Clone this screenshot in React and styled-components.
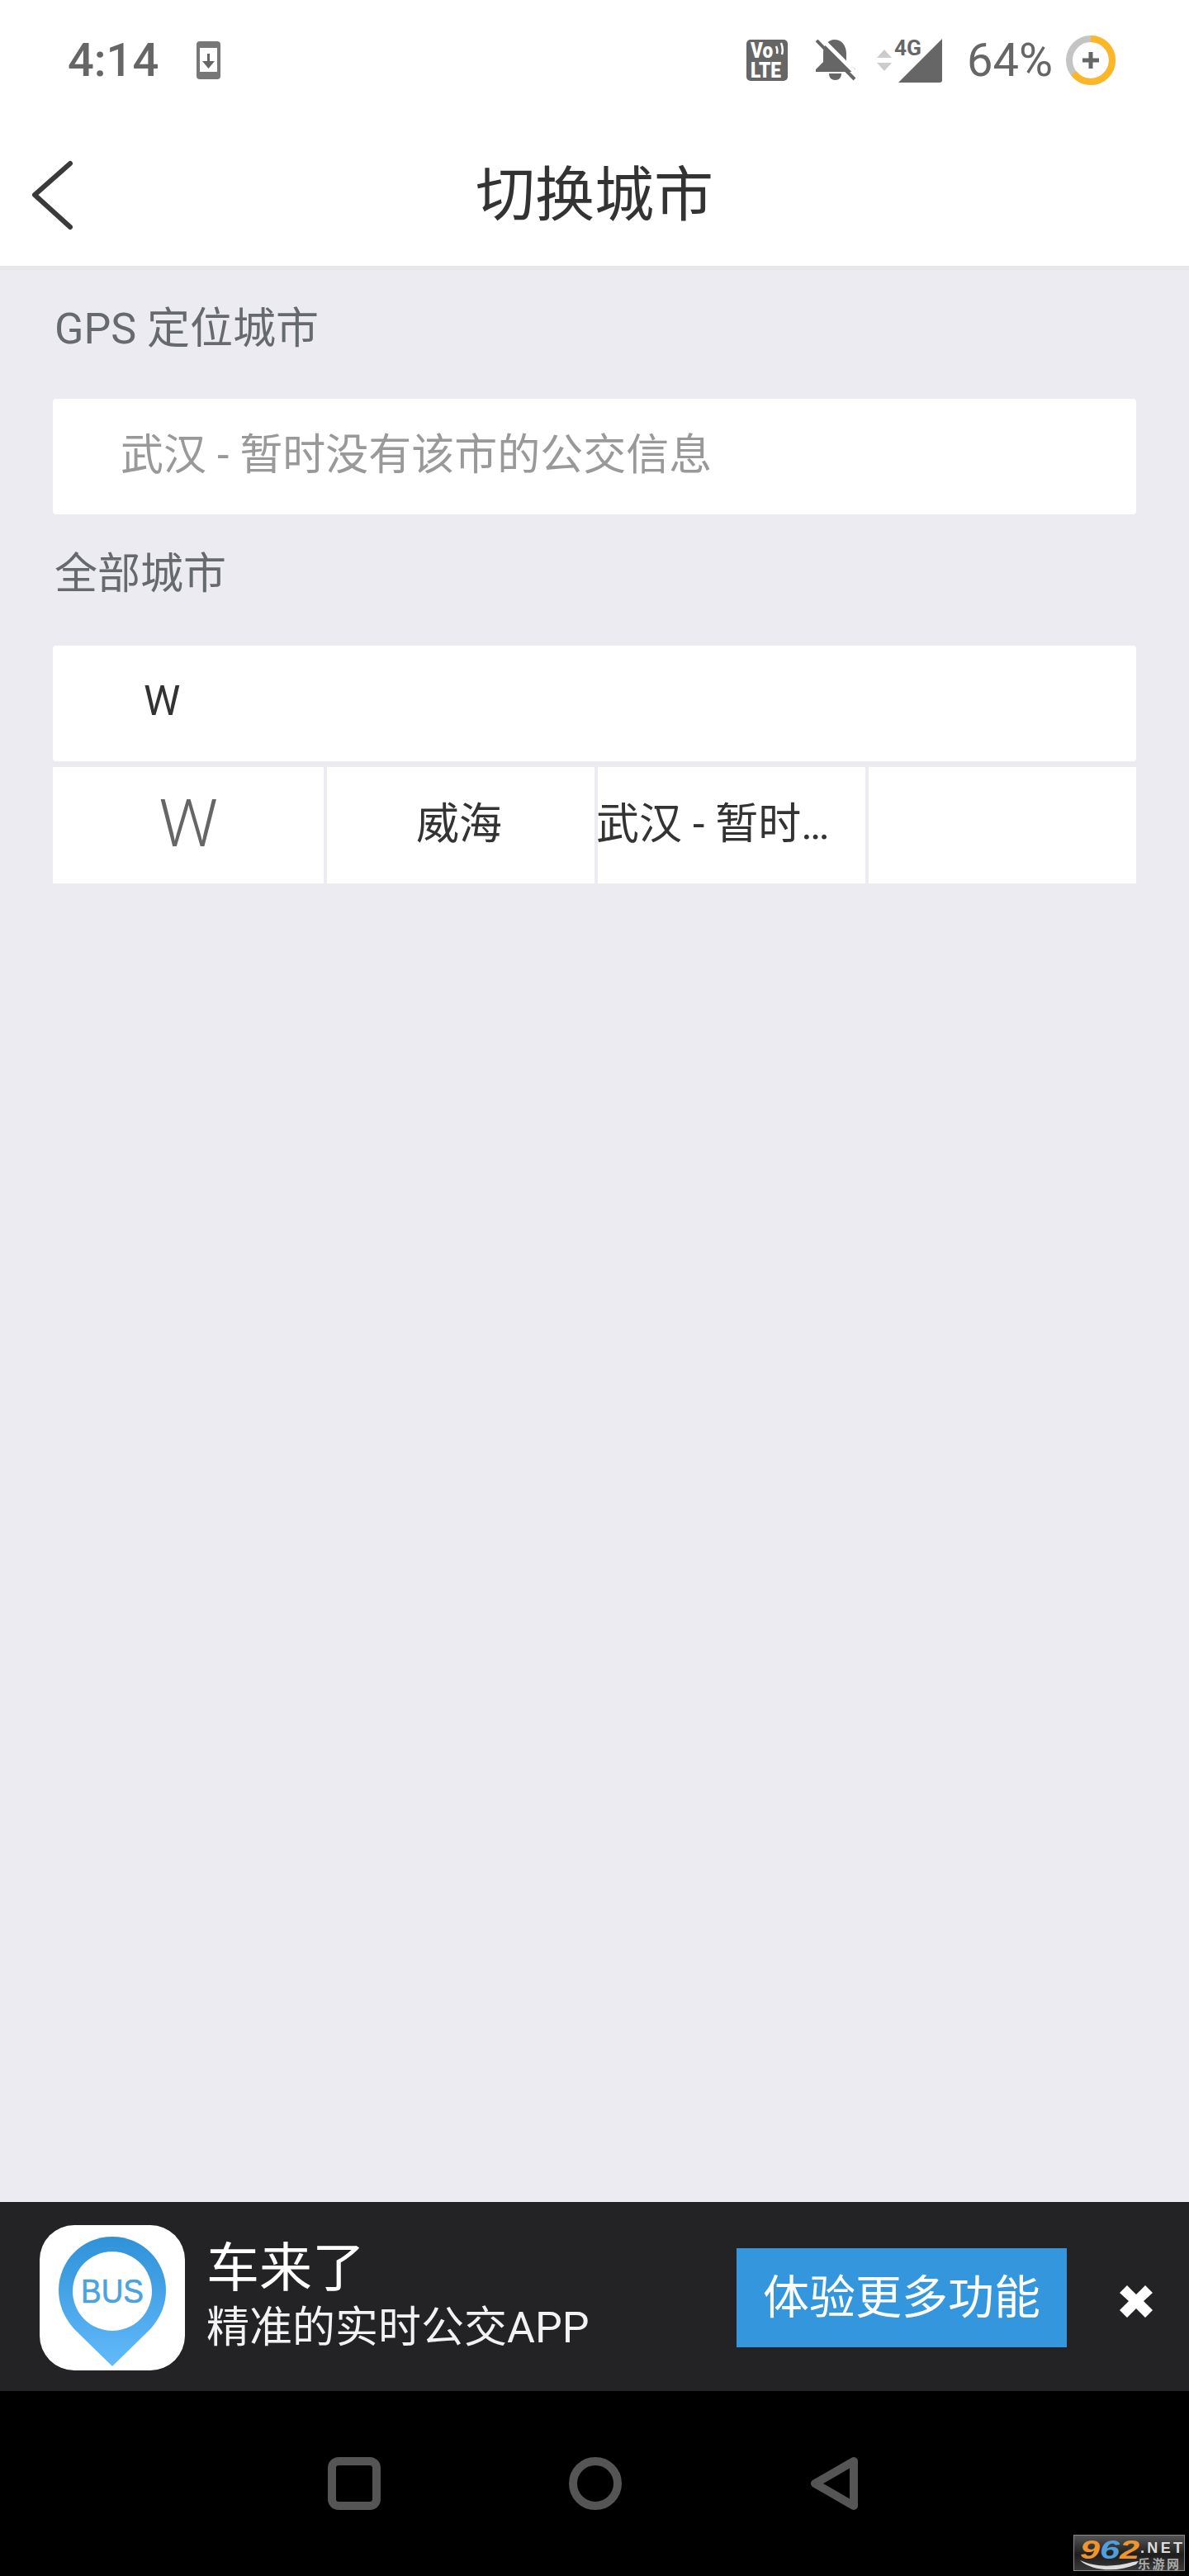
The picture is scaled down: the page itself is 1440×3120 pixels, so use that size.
import React from "react";
import styled, { createGlobalStyle } from "styled-components";

const GlobalStyle = createGlobalStyle`
  html, body {
    margin: 0;
    padding: 0;
  }
  body {
    font-family: Roboto, "Noto Sans CJK SC", sans-serif;
  }
`;

const Screen = styled.div`
  width: 1440px;
  height: 3120px;
  display: flex;
  flex-direction: column;
  position: relative;
  overflow: hidden;
  background: #ebebf1;
`;

const StatusBar = styled.div`
  height: 150px;
  flex: none;
  display: flex;
  align-items: flex-start;
  justify-content: space-between;
  padding: 43px 89px 0 82px;
  box-sizing: border-box;
  background: #fff;
  color: #666;
`;

const StatusGroup = styled.div`
  display: flex;
  align-items: center;
  height: 60px;
`;

const StatusSlot = styled.div`
  display: flex;
  margin-left: ${(p) => p.$left || 0}px;
`;

const StatusText = styled.span`
  font-family: Roboto, sans-serif;
  font-size: 56px;
  line-height: 60px;
  font-weight: ${(p) => p.$weight || 400};
  color: #666;
`;

const VolteBadge = styled.div`
  position: relative;
  width: 50px;
  height: 50px;
  box-sizing: border-box;
  padding: 1px 0 0 5px;
  border-radius: 5px;
  background: #666;
  color: #fff;
  font-family: Roboto, sans-serif;
  font-weight: 900;
  font-size: 26px;
  line-height: 24px;
  white-space: nowrap;
`;

const VolteLabel = styled.div`
  transform: scaleX(0.87);
  transform-origin: left center;
`;

const VolteWaves = styled.svg`
  position: absolute;
  top: 3px;
  right: 4px;
  display: block;
  width: 12px;
  height: 16px;
`;

const TitleBar = styled.div`
  height: 177px;
  flex: none;
  display: flex;
  align-items: center;
  justify-content: center;
  padding-bottom: 13px;
  box-sizing: border-box;
  position: relative;
  background: #fff;
  border-bottom: 5px solid #e6e6eb;
`;

const BackButton = styled.button`
  position: absolute;
  left: 38px;
  top: 43px;
  width: 52px;
  height: 86px;
  padding: 0;
  border: 0;
  background: none;
`;

const Title = styled.h1`
  margin: 0;
  font-family: "Noto Sans CJK SC", sans-serif;
  font-size: 72px;
  line-height: 100px;
  font-weight: 400;
  color: #333;
`;

const Content = styled.main`
  flex: 1;
  display: flex;
  flex-direction: column;
  padding: 0 64px;
`;

const SectionLabel = styled.div`
  height: ${(p) => p.$height}px;
  display: flex;
  align-items: center;
  padding: 0 0 24px 2px;
  box-sizing: border-box;
  font-family: Roboto, "Noto Sans CJK SC", sans-serif;
  font-size: 52px;
  color: #66696e;
`;

const InfoRow = styled.div`
  height: ${(p) => p.$height || 140}px;
  display: flex;
  align-items: center;
  padding-left: ${(p) => p.$indent}px;
  padding-bottom: ${(p) => p.$lift}px;
  box-sizing: border-box;
  border-radius: 4px;
  background: #fff;
  font-family: Roboto, "Noto Sans CJK SC", sans-serif;
  font-size: ${(p) => p.$size || 52}px;
  color: ${(p) => p.$color || "#999"};
`;

const CityGrid = styled.div`
  margin-top: 7px;
  display: grid;
  grid-template-columns: 328px repeat(3, 324px);
  gap: 4px;
  height: 141px;
`;

const CityCell = styled.div`
  display: flex;
  align-items: center;
  justify-content: ${(p) => (p.$start ? "flex-start" : "center")};
  min-width: 0;
  padding-bottom: ${(p) => (p.$letter ? 4 : 12)}px;
  box-sizing: border-box;
  background: #fff;
  font-family: Roboto, "Noto Sans CJK SC", sans-serif;
  font-size: ${(p) => (p.$letter ? 80 : 52)}px;
  font-weight: ${(p) => (p.$letter ? 300 : 400)};
  color: ${(p) => (p.$letter ? "#666" : "#333")};
  white-space: nowrap;
`;

const CityName = styled.span`
  margin-right: 4px;
`;

const ClippedName = styled.span`
  margin-left: -2px;
`;

const Dots = styled.span`
  letter-spacing: -3px;
`;

const Banner = styled.div`
  height: 229px;
  flex: none;
  display: flex;
  align-items: center;
  padding: 3px 44px 0 48px;
  box-sizing: border-box;
  background: #232325;
`;

const AppIcon = styled.div`
  width: 176px;
  height: 176px;
  flex: none;
  display: flex;
  justify-content: center;
  padding-top: 14px;
  box-sizing: border-box;
  border-radius: 42px;
  background: #fff;
`;

const AppText = styled.div`
  flex: 1;
  display: flex;
  flex-direction: column;
  padding: 0 0 12px 26px;
  color: #fff;
  font-family: "Noto Sans CJK SC", sans-serif;
`;

const AppName = styled.div`
  font-size: 64px;
  line-height: 74px;
  margin-bottom: 11px;
`;

const AppSlogan = styled.div`
  font-family: Roboto, "Noto Sans CJK SC", sans-serif;
  font-size: 52px;
  line-height: 62px;
  color: #f2f2f2;
`;

const CtaButton = styled.button`
  width: 400px;
  height: 120px;
  padding: 0 0 12px;
  border: 0;
  background: #3496dd;
  color: #fff;
  font-family: "Noto Sans CJK SC", sans-serif;
  font-size: 56px;
`;

const CloseButton = styled.button`
  width: 40px;
  height: 40px;
  margin: 8px 0 0 64px;
  padding: 0;
  border: 0;
  background: none;
`;

const NavBar = styled.nav`
  height: 224px;
  flex: none;
  display: flex;
  justify-content: center;
  gap: 228px;
  padding: 80px 0 0 2px;
  box-sizing: border-box;
  background: #000;
`;

const NavIcon = styled.svg`
  display: block;
  width: 64px;
  height: 64px;
`;

const Watermark = styled.svg`
  position: absolute;
  right: 5px;
  bottom: 6px;
  display: block;
  width: 135px;
  height: 44px;
`;

function PhoneDownload() {
  return (
    <svg width="29" height="46" viewBox="0 0 29 46">
      <rect width="29" height="46" rx="4" fill="#777" />
      <rect x="4" y="8" width="21" height="29" fill="#fff" />
      <path d="M13 15h3v9h6l-7.500 9L7 24h6z" fill="#666" />
    </svg>
  );
}

function Volte() {
  return (
    <VolteBadge>
      <VolteLabel>
        Vo
        <br />
        LTE
      </VolteLabel>
      <VolteWaves viewBox="0 0 12 16">
        <path d="M2 5q2 4 1 9M8 1q3 7 1 14" stroke="#fff" strokeWidth="2.500" fill="none" />
      </VolteWaves>
    </VolteBadge>
  );
}

function BellOff() {
  return (
    <svg width="50" height="50" viewBox="0 0 50 50">
      <path d="M23 0c9 0 14 8 14 17v10l11 9v3H0v-3l9-9V17C9 8 14 0 23 0z" fill="#666" />
      <path d="M16 41h15c0 5-3 8-7.500 8S16 46 16 41z" fill="#666" />
      <path d="M5 -3l46 46" stroke="#fff" strokeWidth="5" />
      <path d="M1 1l46 47" stroke="#666" strokeWidth="4" />
    </svg>
  );
}

function SignalCluster() {
  return (
    <svg width="82" height="64" viewBox="0 -4 82 64">
      <path d="M0 25l9-10 9 10zM0 31h18l-9 10z" fill="#ccc" />
      <text x="21" y="22" fontFamily="Roboto, sans-serif" fontSize="26" fontWeight="700" fill="#666" textLength="33" lengthAdjust="spacingAndGlyphs">4G</text>
      <path d="M79 2v50c0 2-1 3-3 3H26z" fill="#666" />
    </svg>
  );
}

function BatteryRing() {
  return (
    <svg width="60" height="60" viewBox="0 0 60 60">
      <circle cx="30" cy="30" r="26" fill="none" stroke="#c4c4c4" strokeWidth="8" />
      <circle
        cx="30"
        cy="30"
        r="26"
        fill="none"
        stroke="#fdb724"
        strokeWidth="8"
        strokeDasharray="105 163"
        transform="rotate(-90 30 30)"
      />
      <path d="M27.500 20h5v7.500H40v5h-7.500V40h-5v-7.500H20v-5h7.500z" fill="#666" />
    </svg>
  );
}

function BusLogo() {
  return (
    <svg width="132" height="158" viewBox="0 0 132 158">
      <defs>
        <linearGradient id="pin" x1="0" y1="0" x2="0" y2="1">
          <stop offset="0" stopColor="#2f92d8" />
          <stop offset="1" stopColor="#62bafa" />
        </linearGradient>
      </defs>
      <path d="M66 0c36 0 65 29 65 65 0 19-8 35-20 48l-45 44-45-44C9 100 1 84 1 65 1 29 30 0 66 0z" fill="url(#pin)" />
      <circle cx="66" cy="66" r="48" fill="#fff" />
      <text x="66" y="80" textAnchor="middle" fontFamily="Liberation Sans, sans-serif" fontSize="40" stroke="#4aa3e0" strokeWidth="0.600" fill="#4aa3e0" textLength="76" lengthAdjust="spacingAndGlyphs">BUS</text>
    </svg>
  );
}

function SiteMark() {
  return (
    <Watermark viewBox="0 0 135 44">
      <defs>
        <linearGradient id="mark" x1="0" y1="0" x2="0" y2="1">
          <stop offset="0" stopColor="#555" />
          <stop offset="0.550" stopColor="#1e1e1e" />
          <stop offset="1" stopColor="#3a3a3a" />
        </linearGradient>
      </defs>
      <rect x="0.500" y="0.500" width="134" height="43" fill="url(#mark)" stroke="#888" />
      <text x="8" y="29" fontFamily="Liberation Sans, sans-serif" fontSize="32" fontWeight="700" fontStyle="italic" textLength="72" lengthAdjust="spacingAndGlyphs">
        <tspan fill="#ee952c">9</tspan>
        <tspan fill="#4f9fdc">6</tspan>
        <tspan fill="#ee952c">2</tspan>
      </text>
      <text x="81" y="22" fontFamily="Liberation Sans, sans-serif" fontSize="18" fontWeight="700" fill="#ddd" textLength="51" lengthAdjust="spacing">.NET</text>
      <path d="M8 31c14 13 44 15 68 5l3-4-7 1c-22 6-44 7-64-2z" fill="#ddd" />
      <text x="78" y="41" fontFamily="Noto Sans CJK SC, sans-serif" fontSize="15" fontWeight="700" fill="#aaa" textLength="50" lengthAdjust="spacing">乐游网</text>
    </Watermark>
  );
}

export default function App() {
  return (
    <Screen>
      <GlobalStyle />
      <StatusBar>
        <StatusGroup>
          <StatusText $weight={500}>4:14</StatusText>
          <StatusSlot $left={46}>
            <PhoneDownload />
          </StatusSlot>
        </StatusGroup>
        <StatusGroup>
          <Volte />
          <StatusSlot $left={34}>
            <BellOff />
          </StatusSlot>
          <StatusSlot $left={24}>
            <SignalCluster />
          </StatusSlot>
          <StatusSlot $left={27}>
            <StatusText>64%</StatusText>
          </StatusSlot>
          <StatusSlot $left={16}>
            <BatteryRing />
          </StatusSlot>
        </StatusGroup>
      </StatusBar>
      <TitleBar>
        <BackButton aria-label="back">
          <svg width="52" height="86" viewBox="0 0 52 86">
            <path d="M47 5L4 43l43 39" fill="none" stroke="#3a3a3a" strokeWidth="6" strokeLinecap="round" strokeLinejoin="round" />
          </svg>
        </BackButton>
        <Title>切换城市</Title>
      </TitleBar>
      <Content>
        <SectionLabel $height={156}>GPS 定位城市</SectionLabel>
        <InfoRow $indent={82} $lift={14}>武汉 - 暂时没有该市的公交信息</InfoRow>
        <SectionLabel $height={159}>全部城市</SectionLabel>
        <InfoRow $indent={110} $lift={6} $size={50} $color="#333">W</InfoRow>
        <CityGrid>
          <CityCell $letter>W</CityCell>
          <CityCell>
            <CityName>威海</CityName>
          </CityCell>
          <CityCell $start>
            <ClippedName>武汉 - 暂时<Dots>...</Dots></ClippedName>
          </CityCell>
          <CityCell />
        </CityGrid>
      </Content>
      <Banner>
        <AppIcon>
          <BusLogo />
        </AppIcon>
        <AppText>
          <AppName>车来了</AppName>
          <AppSlogan>精准的实时公交APP</AppSlogan>
        </AppText>
        <CtaButton>体验更多功能</CtaButton>
        <CloseButton aria-label="close">
          <svg width="40" height="40" viewBox="0 0 40 40">
            <path d="M9 1l11 11L31 1l9 9-11 10 11 11-9 9-11-11L9 40l-9-9 11-11L0 10z" fill="#fff" />
          </svg>
        </CloseButton>
      </Banner>
      <NavBar>
        <NavIcon viewBox="0 0 64 64">
          <rect x="5" y="5" width="54" height="54" rx="8" fill="none" stroke="#555" strokeWidth="10" />
        </NavIcon>
        <NavIcon viewBox="0 0 64 64">
          <circle cx="32" cy="32" r="27" fill="none" stroke="#555" strokeWidth="10" />
        </NavIcon>
        <NavIcon viewBox="0 0 64 64">
          <path d="M53 5v54L6 32z" fill="none" stroke="#555" strokeWidth="10" strokeLinejoin="round" />
        </NavIcon>
      </NavBar>
      <SiteMark />
    </Screen>
  );
}
